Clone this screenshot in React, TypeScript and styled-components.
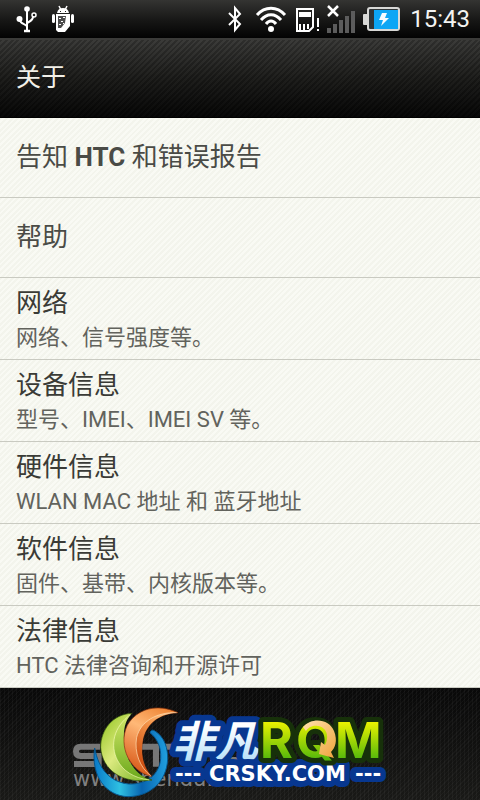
import React from "react";
import styled, { createGlobalStyle } from "styled-components";

const GlobalStyle = createGlobalStyle`
  * { box-sizing: border-box; }
  body {
    margin: 0;
    background: #0c0c0b;
    font-family: Roboto, "Noto Sans CJK SC", sans-serif;
  }
`;

const Screen = styled.div`
  min-height: 100vh;
  display: flex;
  flex-direction: column;
`;

const StatusBar = styled.div`
  height: 38px;
  padding: 0 10px 0 16px;
  display: flex;
  align-items: center;
  justify-content: space-between;
  background: linear-gradient(#343432, #161615 55%, #030303);
`;

const StatusGroup = styled.div<{ $gap: number }>`
  display: flex;
  align-items: center;
  gap: ${(p) => p.$gap}px;
  svg { display: block; }
`;

const Clock = styled.time`
  margin-left: 2px;
  font-size: 24px;
  line-height: 40px;
  color: #f4f4f2;
`;

const Header = styled.header`
  height: 80px;
  padding: 0 16px 2px;
  display: flex;
  align-items: center;
  border-top: 2px solid #3b3b39;
  border-bottom: 1px solid #000;
  background:
    repeating-linear-gradient(135deg, rgba(0, 0, 0, 0.2) 0 2px, rgba(255, 255, 255, 0.01) 2px 4px),
    linear-gradient(#393937, #1c1c1a 50%, #050505);
`;

const Title = styled.h1`
  margin: 0;
  font-size: 25px;
  line-height: 36px;
  font-weight: 400;
  color: #f2f0e8;
`;

const List = styled.ul`
  margin: 0;
  padding: 0;
  list-style: none;
`;

const Row = styled.button<{ $single: boolean }>`
  display: block;
  width: 100%;
  min-height: ${(p) => (p.$single ? 80 : 82)}px;
  padding: ${(p) => (p.$single ? "0 16px 2px" : "7px 16px 4px")};
  border: 0;
  border-bottom: 1px solid #c9cac1;
  text-align: left;
  font-family: inherit;
  color: ${(p) => (p.$single ? "#4a4b46" : "#3a3b36")};
  background:
    repeating-linear-gradient(135deg, rgba(150, 155, 130, 0.05) 0 2px, rgba(255, 255, 255, 0.15) 2px 4px),
    #f8f9f2;
`;

const Label = styled.span`
  display: block;
  font-size: 26px;
  line-height: 36px;
`;

const Summary = styled.span`
  display: block;
  font-size: 22px;
  line-height: 34px;
  color: #62635d;
`;

const Footer = styled.footer`
  flex: 1;
  min-height: 112px;
  display: flex;
  justify-content: center;
  align-items: flex-start;
  padding-right: 20px;
  background:
    repeating-linear-gradient(90deg, rgba(255, 255, 255, 0.035) 0 1px, transparent 1px 4px),
    repeating-linear-gradient(135deg, rgba(255, 255, 255, 0.03) 0 1px, transparent 1px 3px),
    linear-gradient(#090909, #191917);
  svg { display: block; }
`;

const UsbIcon = () => (
  <svg width="22" height="28" viewBox="0 0 22 28" fill="none" stroke="#fff" strokeWidth="2" aria-label="USB">
    <path d="M11 4V26M4 15C4 19 10 19 11 21.500M17 11C17.500 16 12 17 11 18" />
    <circle cx="11" cy="4" r="2.800" fill="#fff" stroke="none" />
    <circle cx="3.500" cy="14" r="3" fill="#fff" stroke="none" />
    <circle cx="18" cy="10" r="2" strokeWidth="1.500" />
    <path d="M8 26h6" strokeWidth="2.500" />
  </svg>
);

const AndroidIcon = () => (
  <svg width="24" height="28" viewBox="0 0 24 28" fill="#fff" aria-label="Android">
    <path d="M6 8Q7 3 12 3T18 8Z" />
    <path d="M8 1l2 4M16 1l-2 4" stroke="#fff" strokeWidth="1.500" />
    <rect x="1" y="9" width="3" height="9" rx="1.500" />
    <rect x="20" y="9" width="3" height="9" rx="1.500" />
    <path d="M5 9h14v12l-5 6H7l-2-2Z" />
    <path d="M7 11h8l-1 7-4 5H7Z" fill="#4b4b4b" />
    <path d="M8 13h2v1H8zM12 12h2v1h-2zM10 16h2v1h-2zM8 19h2v1H8zM12 18h1v1h-1z" />
    <path d="M9 6h1v1H9zM14 6h1v1h-1z" fill="#222" />
  </svg>
);

const BluetoothIcon = () => (
  <svg width="20" height="28" viewBox="0 0 20 28" fill="none" stroke="#fff" strokeWidth="2" aria-label="Bluetooth">
    <path d="M2 8l11 11-5 6V3l5 6L2 20" />
  </svg>
);

const WifiIcon = () => (
  <svg width="32" height="28" viewBox="0 0 32 28" fill="none" stroke="#fff" strokeWidth="3" aria-label="WLAN">
    <path d="M2 10C10 1 22 1 30 10M6 15C12 8 20 8 26 15M11 19C14 15 18 15 21 19" />
    <circle cx="16" cy="24" r="3" fill="#fff" stroke="none" />
  </svg>
);

const SimIcon = () => (
  <svg width="24" height="28" viewBox="0 0 24 28" aria-label="SIM">
    <path d="M2 4h16v18l-4 4H2Z" fill="none" stroke="#fff" strokeWidth="2" />
    <path d="M4 7h12v5H4zM4 19h2v6H4zM8 19h2v6H8zM12 19h2v5h-2zM22 13h2v9h-2zM22 24h2v2h-2z" fill="#fff" />
  </svg>
);

const SignalIcon = () => (
  <svg width="28" height="28" viewBox="1 0 28 28" aria-label="No signal">
    <path d="M1 23h4v5H1zM7 19h4v9H7zM13 15h4v13h-4zM19 11h4v17h-4zM25 6h4v22h-4z" fill="#5c5c5c" />
    <path d="M2 1l10 10M12 1L2 11" stroke="#fff" strokeWidth="2.500" />
  </svg>
);

const BatteryIcon = () => (
  <svg width="37" height="24" viewBox="0 0 37 24" aria-label="Charging">
    <rect x="0" y="7" width="6" height="11" rx="1" fill="#d8d8d6" />
    <rect x="5" y="1" width="31" height="22" rx="2" fill="#303638" stroke="#d8d8d6" strokeWidth="2" />
    <path d="M11 3h24v19H11z" fill="#0da6f5" />
    <path d="M19 6h5l-2 5h4l-8 8 2-6h-4Z" fill="#f4fbff" />
  </svg>
);

const Logo = () => (
  <svg width="340" height="112" viewBox="0 0 340 112" role="img" aria-label="CRSKY">
    <defs>
      <linearGradient id="lime" x1="0" y1="0" x2="1" y2="1">
        <stop offset="0" stopColor="#8fc31a" />
        <stop offset="0.45" stopColor="#dcea80" />
        <stop offset="1" stopColor="#6fb01c" />
      </linearGradient>
      <linearGradient id="limeShade" x1="0" y1="0" x2="0" y2="1">
        <stop offset="0" stopColor="#d3e86a" />
        <stop offset="1" stopColor="#6aa81a" />
      </linearGradient>
      <linearGradient id="orange" x1="0.8" y1="0" x2="0.4" y2="1">
        <stop offset="0" stopColor="#ee8433" />
        <stop offset="0.4" stopColor="#ffb877" />
        <stop offset="1" stopColor="#d95a1a" />
      </linearGradient>
      <linearGradient id="orangeShade" x1="1" y1="0" x2="0.3" y2="1">
        <stop offset="0" stopColor="#ffe0b4" />
        <stop offset="0.4" stopColor="#f69a4e" />
        <stop offset="1" stopColor="#c9480c" />
      </linearGradient>
      <linearGradient id="blue" x1="0" y1="0" x2="1" y2="0">
        <stop offset="0" stopColor="#0878c8" />
        <stop offset="0.35" stopColor="#2fc0e2" />
        <stop offset="0.65" stopColor="#0864b0" />
        <stop offset="1" stopColor="#20a0df" />
      </linearGradient>
      <linearGradient id="ice" x1="0" y1="0" x2="0" y2="1">
        <stop offset="0.3" stopColor="#ffffff" />
        <stop offset="1" stopColor="#a7daf7" />
      </linearGradient>
      <linearGradient id="letters" gradientUnits="userSpaceOnUse" x1="0" y1="32" x2="0" y2="71">
        <stop offset="0" stopColor="#f2f500" />
        <stop offset="1" stopColor="#55b80b" />
      </linearGradient>
      <linearGradient id="arrow" x1="0" y1="0" x2="1" y2="1">
        <stop offset="0" stopColor="#ffe0ad" />
        <stop offset="1" stopColor="#efa43c" />
      </linearGradient>
    </defs>

    <g transform="translate(-10 -8) scale(.3333)">
      <path
        d="M150 200H92Q78 200 78 214T92 228H146V252H72M180 260V220Q180 200 198 200H230V228H180M192 254H242M260 260V200H318V260M340 260V200H380"
        fill="none" stroke="#777" strokeWidth="18"
      />
    </g>
    <path d="M150 73l4-4h22l4 4z" fill="#777" />
    <text x="13" y="98" fontFamily="DejaVu Sans, sans-serif" fontSize="21" fill="#808080">www.shendu.</text>

    <g transform="translate(28 14) scale(.3333)">
      <path
        d="M20 138C32 202 66 240 122 246C176 248 214 218 218 170C220 135 208 110 186 92C188 84 194 82 202 88C230 106 240 140 239 172C236 236 190 283 120 284C54 282 8 222 20 138Z"
        fill="url(#blue)" stroke="#06558e" strokeWidth="3"
      />
      <path
        d="M132 34C74 36 38 84 38 136C42 202 100 248 192 234C136 222 96 170 96 112C98 78 110 54 132 34Z"
        fill="url(#lime)" stroke="#2c500b" strokeWidth="2"
      />
      <path d="M128 38C76 74 66 130 88 174C104 206 136 228 184 234C144 218 108 170 108 112C106 78 114 54 128 38Z" fill="url(#limeShade)" />
      <path d="M128 38C76 74 66 130 88 174C104 206 136 228 184 234" fill="none" stroke="#f4fbb4" strokeWidth="2" />
      <path
        d="M270 32C210 4 148 18 118 70C88 134 128 210 190 223C162 190 156 148 166 106C180 58 220 34 270 32Z"
        fill="url(#orange)" stroke="#8e340a" strokeWidth="2"
      />
      <path d="M266 32C206 30 158 58 146 106C138 152 156 196 188 221C162 190 156 148 166 106C180 58 220 34 266 32Z" fill="url(#orangeShade)" />
      <path d="M266 32C206 30 158 58 146 106C138 152 156 196 188 221" fill="none" stroke="#ffe3b8" strokeWidth="2" />
    </g>

    <text
      x="112" y="69" fontFamily="Noto Sans CJK SC, sans-serif" fontSize="43" fontWeight="700" fontStyle="italic"
      fill="url(#ice)" stroke="#073790" strokeWidth="12" strokeLinejoin="round" paintOrder="stroke"
    >
      非凡
    </text>
    <text
      y="93" fontFamily="DejaVu Sans, sans-serif" fontSize="21" fontWeight="700"
      fill="#fff" stroke="#073790" strokeWidth="12" strokeLinejoin="round" paintOrder="stroke"
    >
      <tspan x="115">---</tspan>
      <tspan x="149">CRSKY.COM</tspan>
      <tspan x="295">---</tspan>
    </text>
    <text
      x="200 236 275" y="70" fontFamily="Inter, sans-serif" fontSize="50" fontWeight="700"
      fill="url(#letters)" stroke="#17310a" strokeWidth="10" strokeLinejoin="round" paintOrder="stroke"
    >
      RQM
    </text>
    <path
      d="M243 39C253 28 270 32 274 43C278 53 275 60 271 64L274 70L259 66L261 54L265 57C270 48 266 39 258 38C252 37 248 40 246 43Z"
      fill="url(#arrow)"
    />
  </svg>
);

type Item = { label: React.ReactNode; summary?: string };

const items: Item[] = [
  { label: <>告知 <b>HTC</b> 和错误报告</> },
  { label: "帮助" },
  { label: "网络", summary: "网络、信号强度等。" },
  { label: "设备信息", summary: "型号、IMEI、IMEI SV 等。" },
  { label: "硬件信息", summary: "WLAN MAC 地址 和 蓝牙地址" },
  { label: "软件信息", summary: "固件、基带、内核版本等。" },
  { label: "法律信息", summary: "HTC 法律咨询和开源许可" },
];

export default function App() {
  return (
    <Screen lang="zh-CN">
      <GlobalStyle />
      <StatusBar>
        <StatusGroup $gap={13}>
          <UsbIcon />
          <AndroidIcon />
        </StatusGroup>
        <StatusGroup $gap={8}>
          <BluetoothIcon />
          <WifiIcon />
          <SimIcon />
          <SignalIcon />
          <BatteryIcon />
          <Clock>15:43</Clock>
        </StatusGroup>
      </StatusBar>
      <Header>
        <Title>关于</Title>
      </Header>
      <List>
        {items.map((item, i) => (
          <li key={i}>
            <Row type="button" $single={!item.summary}>
              <Label>{item.label}</Label>
              {item.summary && <Summary>{item.summary}</Summary>}
            </Row>
          </li>
        ))}
      </List>
      <Footer>
        <Logo />
      </Footer>
    </Screen>
  );
}
